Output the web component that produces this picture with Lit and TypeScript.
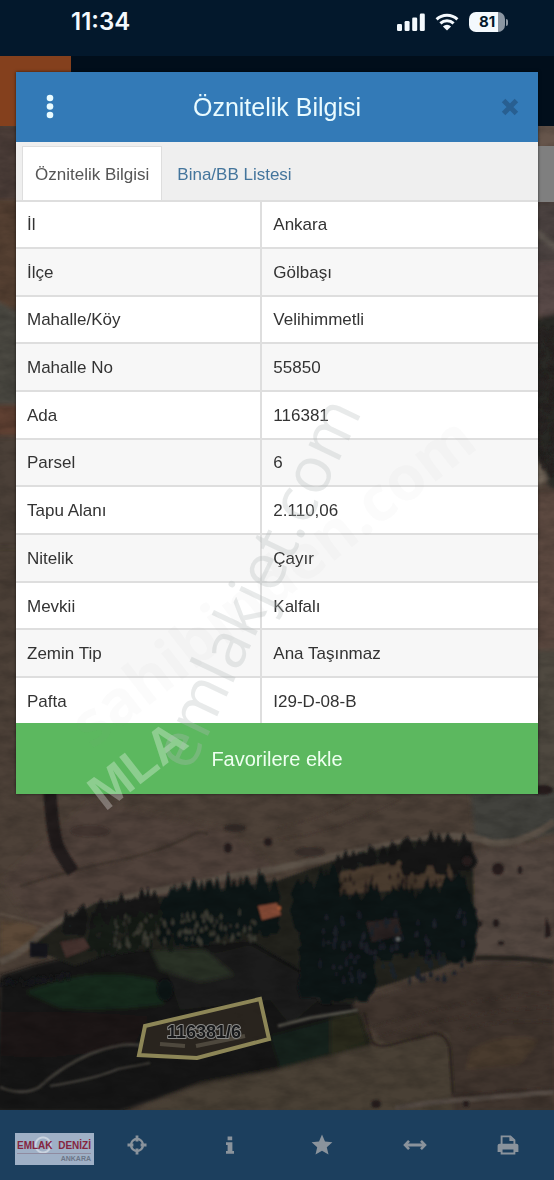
import { LitElement, html, svg, css } from "lit";
import { customElement, property, state } from "lit/decorators.js";

type Row = [string, string];

const ROWS: Row[] = [
  ["İl", "Ankara"],
  ["İlçe", "Gölbaşı"],
  ["Mahalle/Köy", "Velihimmetli"],
  ["Mahalle No", "55850"],
  ["Ada", "116381"],
  ["Parsel", "6"],
  ["Tapu Alanı", "2.110,06"],
  ["Nitelik", "Çayır"],
  ["Mevkii", "Kalfalı"],
  ["Zemin Tip", "Ana Taşınmaz"],
  ["Pafta", "I29-D-08-B"],
];

/* Repeatable random numbers, so that the trees stand in the same place on each load. */
function seeded(seed: number) {
  let s = seed;
  return () => {
    s = (s * 16807) % 2147483647;
    return s / 2147483647;
  };
}

/* One path of narrow tree crowns scattered over a box that follows a slope. */
function grove(seed: number, count: number, x: number, y: number, w: number, h: number, slope: number, size: number) {
  const r = seeded(seed);
  let d = "";
  for (let i = 0; i < count; i++) {
    const u = r();
    const px = x + u * w;
    const py = y + slope * u + r() * h;
    const hw = size * (0.25 + r() * 0.3);
    const hh = size * (0.6 + r() * 1.1);
    d += `M${px.toFixed(1)} ${(py - hh).toFixed(1)}l${hw.toFixed(1)} ${hh.toFixed(1)}l${(-hw / 2).toFixed(1)} ${(hh / 2).toFixed(1)}h${(-hw).toFixed(1)}l${(-hw / 2).toFixed(1)} ${(-hh / 2).toFixed(1)}z`;
  }
  return d;
}

@customElement("parcel-map")
export class ParcelMap extends LitElement {
  static styles = css`
    :host { display: block; overflow: hidden; }
    .picture { display: block; width: 100%; height: 100%; }
    .label { font: bold 18px "Liberation Sans", Arial, sans-serif; }
  `;

  render() {
    return html`
      <svg class="picture" viewBox="0 56 554 1054" preserveAspectRatio="xMidYMax slice" role="img" aria-label="Uydu haritası">
        ${svg`
        <defs>
          <filter id="grain" x="0" y="0" width="100%" height="100%">
            <feTurbulence type="fractalNoise" baseFrequency="0.04 0.09" numOctaves="5" seed="4"></feTurbulence>
            <feColorMatrix values="0 0 0 0 0  0 0 0 0 0  0 0 0 0 0  1.6 0 0 0 -0.55"></feColorMatrix>
          </filter>
          <filter id="soft" x="-10%" y="-10%" width="120%" height="120%"><feGaussianBlur stdDeviation="2.2"></feGaussianBlur></filter>
          <filter id="edge" x="-5%" y="-5%" width="110%" height="110%"><feGaussianBlur stdDeviation="0.9"></feGaussianBlur></filter>
        </defs>
        <rect y="56" width="554" height="1054" fill="#4d4138"></rect>

        <g filter="url(#soft)">
          <rect x="-5" y="126" width="30" height="75" fill="#4b3e39"></rect>
          <rect x="-5" y="200" width="30" height="108" fill="#543f31"></rect>
          <path d="M-5 300L25 316V405H-5z" fill="#4b4a43"></path>
          <rect x="-5" y="405" width="30" height="30" fill="#5e4131"></rect>
          <rect x="-5" y="437" width="30" height="110" fill="#4c4038"></rect>
          <rect x="530" y="120" width="30" height="32" fill="#66554b"></rect>
          <rect x="530" y="202" width="30" height="60" fill="#4b4340"></rect>
          <path d="M530 228L560 250" stroke="#6b635b" stroke-width="4"></path>
          <rect x="530" y="262" width="30" height="54" fill="#594a46"></rect>
          <path d="M530 322L560 312V500L545 480H530z" fill="#2c2927"></path>
          <path d="M535 455L548 478L535 488z" fill="#766a5d"></path>
          <rect x="530" y="490" width="30" height="160" fill="#5b4a3f"></rect>
          <rect x="530" y="650" width="30" height="145" fill="#504841"></rect>
          <path d="M470 790H560V832L500 845L475 838z" fill="#42423c"></path>
          <path d="M0 920L45 925L30 950L0 958z" fill="#5b4838"></path>
          <path d="M0 880L90 800L230 830L280 870L40 935z" fill="#51443c" opacity=".7"></path>
          <path d="M475 850L554 840V960H475z" fill="#524740"></path>
          <path d="M0 976L30 966L110 945L330 935L350 1000L360 1012L372 1045L277 1070L200 1084L120 1112H-5z" fill="#131916"></path>
          <path d="M25 992Q95 964 155 980L165 1004Q110 1012 60 1008z" fill="#192a1c"></path>
          <path d="M0 1012Q70 1010 150 1016L135 1044Q70 1062 0 1056z" fill="#1a1918"></path>
          <path d="M165 965L250 945L330 990L290 1025L270 1000L180 1010z" fill="#1e1c1a"></path>
          <path d="M150 948L205 950L235 975L200 982L160 970z" fill="#2c3027"></path>
          <path d="M270 1036L352 1014L368 1044L280 1068z" fill="#13241a"></path>
          <path d="M330 1018L358 1012L368 1043L330 1054z" fill="#292c1a"></path>
          <path d="M130 1112L200 1084L277 1070L370 1045L384 1030L450 1033L460 1115z" fill="#4a4036"></path>
          <path d="M352 1005L440 975L490 962L554 966V1112H455L448 1033L385 1044z" fill="#40352f"></path>
          <path d="M470 1050Q500 1030 540 1040L520 1065L465 1070z" fill="#483a2e"></path>
        </g>

        <g fill="none" filter="url(#edge)">
          <path d="M0 962Q25 952 42 932Q60 918 105 904Q160 888 277 869Q370 848 430 838Q470 833 490 843Q520 846 554 822" stroke="#5d5248" stroke-width="7"></path>
          <path d="M0 914Q30 920 48 926" stroke="#62544a" stroke-width="2"></path>
          <path d="M20 886Q90 865 120 860Q165 850 190 836Q198 830 208 834" stroke="#40362f" stroke-width="3"></path>
          <path d="M277 840Q340 832 400 800M277 828Q320 820 355 800" stroke="#3f342d" stroke-width="1"></path>
          <path d="M50 792Q52 830 58 848Q66 862 73 872" stroke="#201b1b" stroke-width="13"></path>
          <path d="M0 1087Q20 1096 38 1088Q62 1066 90 1054Q120 1042 140 1045" stroke="#403d38" stroke-width="3"></path>
          <path d="M50 1086Q95 1079 118 1069L150 1063" stroke="#45423c" stroke-width="2"></path>
          <path d="M278 1026L310 1018L358 1010" stroke="#55524b" stroke-width="3"></path>
          <path d="M364 1012L372 1042Q378 1048 390 1045L435 1033Q446 1034 450 1048L453 1094" stroke="#2c231e" stroke-width="2"></path>
          <path d="M475 958Q520 957 554 962" stroke="#2c2523" stroke-width="5"></path>
          <path d="M453 1096L554 1089" stroke="#352a25" stroke-width="2"></path>
          <path d="M395 1108Q430 1102 460 1100L554 1092" stroke="#554c44" stroke-width="5"></path>
          <path d="M365 1030Q450 1000 554 992M380 1036Q460 1012 554 1006M460 1030Q500 1018 554 1022" stroke="#382e29" stroke-width="1"></path>
        </g>

        <g filter="url(#edge)">
          <path d="M30 948L65 921L95 903L165 896L277 881L310 869L340 859L412 841L472 842L475 952L440 968L370 990L352 1004L320 1003L300 970L250 940L175 948L110 953L75 966z" fill="#20231f"></path>
          <path d="${grove(11, 60, 66, 922, 90, 12, -22, 11)}" fill="#121517"></path>
          <path d="${grove(29, 90, 90, 920, 90, 34, -8, 8)}" fill="#161b18"></path>
          <path d="${grove(37, 150, 165, 898, 110, 42, -12, 13)}" fill="#111617"></path>
          <path d="M340 872L412 858L450 862L455 885L340 895z" fill="#493a2e"></path>
          <path d="${grove(43, 34, 338, 862, 75, 8, -12, 10)}" fill="#131618"></path>
          <path d="${grove(47, 60, 405, 848, 68, 20, -2, 12)}" fill="#131517"></path>
          <path d="${grove(53, 26, 340, 878, 110, 16, -6, 4)}" fill="#241e1c"></path>
          <path d="${grove(61, 330, 304, 905, 166, 50, -8, 15)}" fill="#101317"></path>
          <path d="${grove(67, 170, 304, 950, 66, 46, -4, 15)}" fill="#111317"></path>
          <path d="${grove(71, 80, 296, 890, 40, 60, -8, 14)}" fill="#111617"></path>
          <path d="${grove(73, 60, 446, 885, 26, 70, 0, 14)}" fill="#0e1217"></path>
          <path d="M366 922L398 918L402 935L372 942z" fill="#2a2322"></path>
          <path d="${grove(79, 36, 0, 982, 70, 5, -8, 4)}" fill="#15191a"></path>
          <path d="${grove(83, 90, 115, 916, 140, 32, -4, 4)}" fill="#3c3d35"></path>
          <path d="${grove(89, 90, 320, 915, 145, 70, -4, 5)}" fill="#1e212a"></path>
          <path d="M30 942L48 944L47 958L30 957z" fill="#14181d"></path>
          <path d="M60 942L84 938L90 948L66 958z" fill="#44302d"></path>
          <ellipse cx="165" cy="990" rx="8" ry="11" fill="#101417"></ellipse>
          <path d="M258 906L277 903L281 915L262 920z" fill="#8a4d38"></path>
          <circle cx="279" cy="908" r="2" fill="#b0603c"></circle>
          <circle cx="398" cy="939" r="2" fill="#777b7b"></circle>
        </g>

        <g fill="#261f1e" filter="url(#edge)">
          <ellipse cx="228" cy="848" rx="4" ry="5"></ellipse>
          <ellipse cx="268" cy="842" rx="4" ry="4"></ellipse>
          <ellipse cx="498" cy="869" rx="6" ry="6"></ellipse>
          <ellipse cx="467" cy="861" rx="5" ry="5"></ellipse>
          <ellipse cx="520" cy="870" rx="2" ry="4"></ellipse>
          <ellipse cx="496" cy="923" rx="3" ry="4"></ellipse>
          <ellipse cx="480" cy="924" rx="2" ry="3"></ellipse>
          <ellipse cx="501" cy="943" rx="3" ry="2"></ellipse>
          <path d="M546 917l4 10l1 9l-6 2z"></path>
          <ellipse cx="376" cy="1104" rx="5" ry="4"></ellipse>
          <ellipse cx="466" cy="1104" rx="3" ry="3"></ellipse>
          <ellipse cx="310" cy="852" rx="15" ry="5" opacity=".55"></ellipse>
          <ellipse cx="90" cy="831" rx="20" ry="6" opacity=".35"></ellipse>
          <ellipse cx="235" cy="828" rx="11" ry="4" opacity=".6"></ellipse>
          <path d="${grove(97, 90, 538, 330, 16, 150, 0, 5)}" opacity=".8"></path>
          <ellipse cx="543" cy="790" rx="10" ry="5"></ellipse>
        </g>

        <rect y="126" width="554" height="984" filter="url(#grain)" opacity=".22"></rect>

        <path d="M145 1026L260 999L269 1039L197 1058L139 1055z" fill="#302a22" fill-opacity=".75" stroke="#8d8657" stroke-width="4"></path>
        <path d="M160 1044L185 1046M196 1046L245 1036" stroke="#5f594c" stroke-width="4" opacity=".7"></path>
        <text class="label" x="204" y="1038" text-anchor="middle" fill="#17181a" stroke="#8b8b89" stroke-width="2" paint-order="stroke" stroke-linejoin="round">116381/6</text>
        `}
      </svg>
    `;
  }
}

@customElement("status-bar")
export class StatusBar extends LitElement {
  static styles = css`
    :host {
      display: flex;
      justify-content: space-between;
      align-items: center;
      box-sizing: border-box;
      height: 56px;
      padding: 0 46px 12px 71px;
      background: #03182c;
      color: #f4f9fd;
      font-family: Inter, "Liberation Sans", sans-serif;
    }
    .time { font-size: 24px; line-height: 28px; font-weight: 600; }
    .signals { display: flex; align-items: center; gap: 10px; }
    .battery { display: flex; align-items: center; gap: 1px; }
    .level {
      width: 36px;
      border-radius: 7px;
      background: linear-gradient(90deg, #f4f9fd 81%, #8b96a2 81%);
      color: #03182c;
      font-size: 15px;
      line-height: 20px;
      font-weight: 700;
      text-align: center;
    }
    .tip { width: 2px; height: 7px; border-radius: 0 2px 2px 0; background: #8b96a2; }
  `;

  render() {
    return html`
      <span class="time">11:34</span>
      <span class="signals">
        <svg width="28" height="18" viewBox="0 0 28 18" fill="currentColor" aria-hidden="true">
          <rect x="0" y="11" width="5" height="7" rx="1.3"></rect>
          <rect x="7.6" y="8" width="5" height="10" rx="1.3"></rect>
          <rect x="15.2" y="4.4" width="5" height="13.6" rx="1.3"></rect>
          <rect x="22.8" y="0.6" width="5" height="17.4" rx="1.3"></rect>
        </svg>
        <svg width="24" height="18" viewBox="0 0 24 18" aria-hidden="true">
          <path d="M1.6 6.4a15 15 0 0 1 20.8 0M5.4 10.4a9.6 9.6 0 0 1 13.2 0" fill="none" stroke="currentColor" stroke-width="3"></path>
          <path d="M12 17.6L7.9 13.4a6 6 0 0 1 8.2 0z" fill="currentColor"></path>
        </svg>
        <span class="battery"><span class="level">81</span><span class="tip"></span></span>
      </span>
    `;
  }
}

@customElement("attribute-panel")
export class AttributePanel extends LitElement {
  @property({ attribute: false }) rows: Row[] = [];
  @state() private tab = 0;

  static styles = css`
    :host {
      display: block;
      background: #fff;
      box-shadow: 0 0 3px rgba(0, 0, 0, 0.6);
      color: #333;
      font-size: 17px;
      line-height: 24px;
    }
    button { border: 0; margin: 0; padding: 0; background: none; font: inherit; color: inherit; cursor: pointer; }
    .head {
      display: grid;
      grid-template-columns: 68px 1fr 68px;
      align-items: center;
      height: 70px;
      background: #337ab7;
      color: #e9fbff;
    }
    .title { margin: 0; font-size: 25px; line-height: 32px; font-weight: 400; text-align: center; }
    .icon { display: grid; place-items: center; height: 70px; }
    .close { color: #285f91; padding-left: 12px; }
    .tabs {
      display: flex;
      align-items: flex-end;
      gap: 2px;
      height: 60px;
      box-sizing: border-box;
      padding-left: 6px;
      background: #efefef;
      border-bottom: 2px solid #dedede;
    }
    .tab { height: 54px; padding: 2px 12px 0; color: #44759c; border: 1px solid transparent; border-bottom: 0; }
    .tab.active { color: #555; background: #fff; border-color: #dedede; }
    .data { width: 100%; height: 521px; border-collapse: collapse; table-layout: fixed; }
    .data th, .data td { padding: 2px 11px 0; font-weight: 400; text-align: left; border-top: 2px solid #dedede; }
    .data tr:first-child th, .data tr:first-child td { border-top: 0; }
    .data th { width: 47%; box-sizing: border-box; border-right: 2px solid #dedede; }
    .data tr:nth-child(even) { background: #f7f7f7; }
    .favourite { display: block; width: 100%; height: 71px; background: #5cb85f; color: #eefff0; font-size: 20px; }
  `;

  render() {
    return html`
      <header class="head">
        <button class="icon" aria-label="Menü">
          <svg width="8" height="26" viewBox="0 0 8 26" fill="currentColor"><circle cx="4" cy="4" r="3.3"></circle><circle cx="4" cy="12.5" r="3.3"></circle><circle cx="4" cy="21" r="3.3"></circle></svg>
        </button>
        <h1 class="title">Öznitelik Bilgisi</h1>
        <button class="icon close" aria-label="Kapat">
          <svg width="18" height="18" viewBox="0 0 18 18"><path d="M2.6 2.6L15.4 15.4M15.4 2.6L2.6 15.4" stroke="currentColor" stroke-width="5"></path></svg>
        </button>
      </header>
      <div class="tabs" role="tablist">
        ${["Öznitelik Bilgisi", "Bina/BB Listesi"].map(
          (name, i) => html`<button class="tab ${this.tab === i ? "active" : ""}" role="tab" aria-selected=${this.tab === i} @click=${() => (this.tab = i)}>${name}</button>`
        )}
      </div>
      <table class="data">
        <tbody>
          ${this.rows.map(([name, value]) => html`<tr><th scope="row">${name}</th><td>${value}</td></tr>`)}
        </tbody>
      </table>
      <button class="favourite">Favorilere ekle</button>
    `;
  }
}

@customElement("tool-bar")
export class ToolBar extends LitElement {
  static styles = css`
    :host { display: grid; grid-template-columns: 91px repeat(5, 1fr); height: 70px; background: #1c3f5e; color: #8a939c; }
    .tool { display: grid; place-items: center; border: 0; padding: 0; background: none; color: inherit; cursor: pointer; }
    .brand {
      align-self: center;
      justify-self: start;
      display: flex;
      flex-direction: column;
      box-sizing: border-box;
      width: 79px;
      height: 32px;
      margin: 8px 0 0 15px;
      padding: 6px 3px 0 2px;
      background: radial-gradient(circle at 28px 12px, #9fb0c6 6px, #c9d3df 7px, #c9d3df 8px, #9fb0c6 9px);
      font-family: "Liberation Sans", Arial, sans-serif;
      text-align: right;
    }
    .name { display: flex; justify-content: space-between; color: #85253f; font-size: 10px; line-height: 14px; font-weight: 700; border-bottom: 1px solid #8f8ba0; }
    .city { color: #6c7688; font-size: 7px; line-height: 9px; font-weight: 700; }
  `;

  render() {
    return html`
      <div class="brand"><span class="name"><span>EMLAK</span><span>DENİZİ</span></span><span class="city">ANKARA</span></div>
      <button class="tool" aria-label="Konum">
        <svg width="20" height="20" viewBox="0 0 20 20" fill="none" stroke="currentColor"><circle cx="10" cy="10" r="6" stroke-width="2.3"></circle><path d="M10 0.5V6.4M10 13.6V19.5M0.5 10H6.4M13.6 10H19.5" stroke-width="2.8"></path></svg>
      </button>
      <button class="tool" aria-label="Bilgi">
        <svg width="10" height="18" viewBox="0 0 10 18" fill="currentColor"><path d="M2.6 0.4H7.2V4.2H2.6zM1 6.2H7.4V15H9V17.8H1V15H2.6V9H1z"></path></svg>
      </button>
      <button class="tool" aria-label="Favoriler">
        <svg width="22" height="22" viewBox="0 0 22 22" fill="currentColor"><path d="M11 0.6L14 7.6L21.4 8.3L15.8 13.2L17.5 20.6L11 16.7L4.5 20.6L6.2 13.2L0.6 8.3L8 7.6z"></path></svg>
      </button>
      <button class="tool" aria-label="Ölç">
        <svg width="24" height="12" viewBox="0 0 24 12" fill="none" stroke="currentColor"><path d="M3 6H21" stroke-width="3"></path><path d="M6 1.8L2 6L6 10.2M18 1.8L22 6L18 10.2" stroke-width="2.6"></path></svg>
      </button>
      <button class="tool" aria-label="Yazdır">
        <svg width="22" height="20" viewBox="0 0 22 20"><path d="M4.6 9.5V1.4H13.4L17.4 5.2V9.5" fill="none" stroke="currentColor" stroke-width="1.9"></path><path d="M12.4 1.2V6H17.6z" fill="currentColor"></path><path d="M0.6 17V10.6Q0.6 8.8 2.6 8.8H19.4Q21.4 8.8 21.4 10.6V17H17.4V14H4.6V17z" fill="currentColor"></path><path d="M4.6 13.6V18.5H17.4V13.6z" fill="none" stroke="currentColor" stroke-width="1.9"></path></svg>
      </button>
    `;
  }
}

@customElement("app-root")
export class AppRoot extends LitElement {
  static styles = css`
    :host {
      position: relative;
      display: flex;
      flex-direction: column;
      min-height: 100vh;
      overflow: hidden;
      background: #03182c;
      font-family: "Liberation Sans", Arial, sans-serif;
    }
    .stage { position: relative; flex: 1; display: grid; grid-template-rows: 70px 1fr; }
    .map { position: absolute; inset: 0; }
    .bar { position: relative; grid-area: 1 / 1; background: #010e1b; }
    .badge { width: 71px; height: 70px; background: #84401d; }
    .search { position: relative; grid-area: 2 / 1; align-self: start; margin: 20px 0 0 280px; height: 56px; background: #7f7f7f; }
    .panel { position: relative; grid-area: 1 / 1 / 3 / 2; align-self: start; margin: 16px; }
    .marks { position: absolute; inset: 0; width: 100%; height: 100%; pointer-events: none; }
    .mark { font-family: "Open Sans", "Noto Sans", sans-serif; }
    .thin { font-size: 64px; fill: #b4b9bb; fill-opacity: 0.3; }
    .wide { font-size: 62px; font-weight: 700; fill: #8d9494; fill-opacity: 0.04; }
    .bold { font-size: 50px; font-weight: 700; fill: #fff; fill-opacity: 0.3; font-family: "Liberation Sans", Arial, sans-serif; }
  `;

  render() {
    return html`
      <status-bar></status-bar>
      <main class="stage">
        <parcel-map class="map"></parcel-map>
        <div class="bar"><div class="badge"></div></div>
        <div class="search"></div>
        <attribute-panel class="panel" .rows=${ROWS}></attribute-panel>
      </main>
      <tool-bar></tool-bar>
      <svg class="marks" viewBox="0 0 554 1180" aria-hidden="true">
        <text class="mark wide" transform="translate(92 750) rotate(-38)">sahibinden.com</text>
        <text class="mark bold" transform="translate(105 812) rotate(-38)">MLA</text>
        <text class="mark thin" text-anchor="middle" transform="translate(261 585) rotate(-64.5)" y="17">emlakjet.com</text>
      </svg>
    `;
  }
}
